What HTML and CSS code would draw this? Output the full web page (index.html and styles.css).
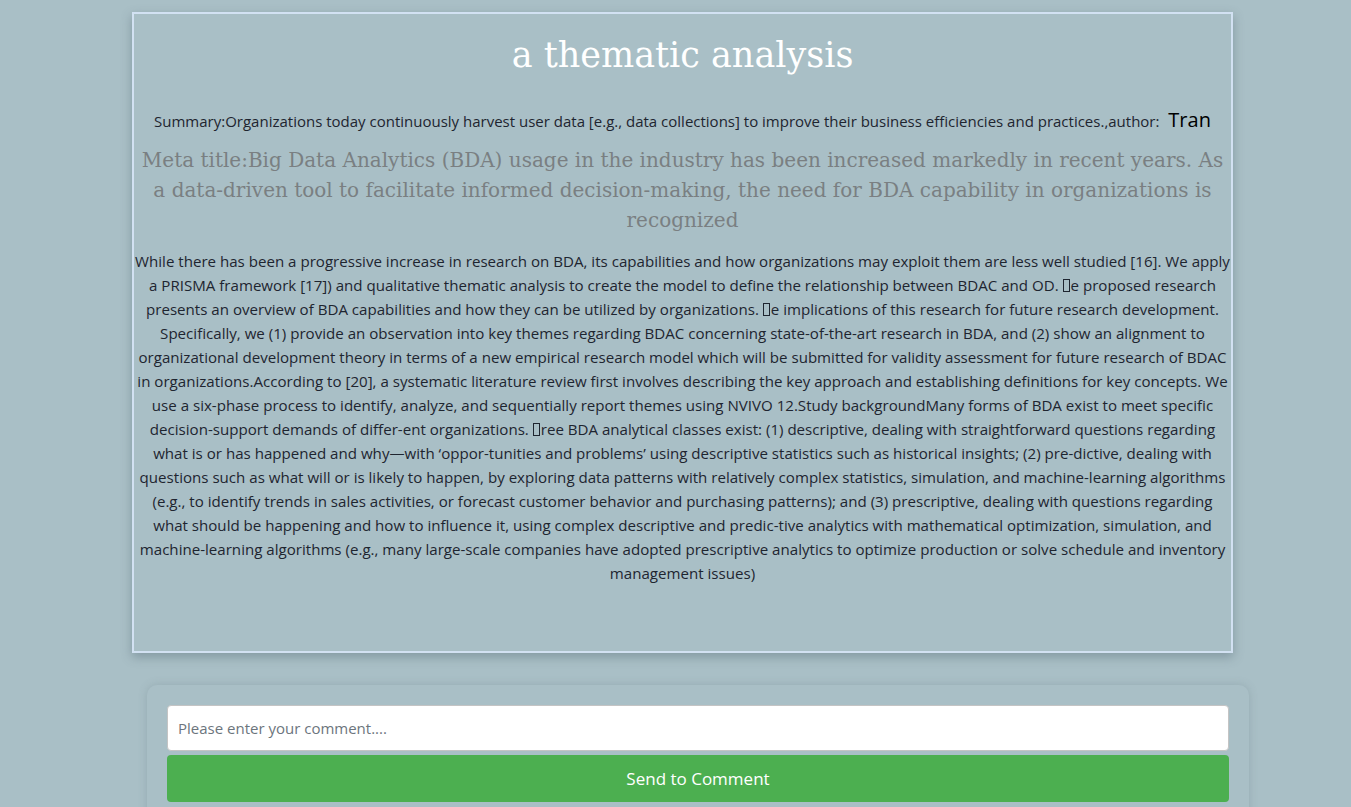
FILE: index.html
```html
<!DOCTYPE html>
<html>
<head>
<meta charset="utf-8">
<link rel="stylesheet" href="styles.css">
</head>
<body>
<div class="page">
  <article class="card">
    <h1 class="title">a thematic analysis</h1>
    <p class="summary">Summary:Organizations today continuously harvest user data [e.g., data collections] to improve their business efficiencies and practices.,author: <span class="author">Tran</span></p>
    <h2 class="meta">Meta title:Big Data Analytics (BDA) usage in the industry has been increased markedly in recent years. As a data-driven tool to facilitate informed decision-making, the need for BDA capability in organizations is recognized</h2>
    <p class="body">While there has been a progressive increase in research on BDA, its capabilities and how organizations may exploit them are less well studied [16]. We apply a PRISMA framework [17]) and qualitative thematic analysis to create the model to define the relationship between BDAC and OD. <span class="tofu"></span>e proposed research presents an overview of BDA capabilities and how they can be utilized by organizations. <span class="tofu"></span>e implications of this research for future research development. Specifically, we (1) provide an observation into key themes regarding BDAC concerning state-of-the-art research in BDA, and (2) show an alignment to organizational development theory in terms of a new empirical research model which will be submitted for validity assessment for future research of BDAC in organizations.According to [20], a systematic literature review first involves describing the key approach and establishing definitions for key concepts. We use a six-phase process to identify, analyze, and sequentially report themes using NVIVO 12.Study backgroundMany forms of BDA exist to meet specific decision-support demands of differ-ent organizations. <span class="tofu"></span>ree BDA analytical classes exist: (1) descriptive, dealing with straightforward questions regarding what is or has happened and why—with ‘oppor-tunities and problems’ using descriptive statistics such as historical insights; (2) pre-dictive, dealing with questions such as what will or is likely to happen, by exploring data patterns with relatively complex statistics, simulation, and machine-learning algorithms (e.g., to identify trends in sales activities, or forecast customer behavior and purchasing patterns); and (3) prescriptive, dealing with questions regarding what should be happening and how to influence it, using complex descriptive and predic-tive analytics with mathematical optimization, simulation, and machine-learning algorithms (e.g., many large-scale companies have adopted prescriptive analytics to optimize production or solve schedule and inventory management issues)</p>
  </article>
  <section class="comment">
    <input class="comment-input" type="text" placeholder="Please enter your comment....">
    <button class="comment-btn">Send to Comment</button>
  </section>
</div>
</body>
</html>
```
FILE: styles.css
```css
html, body {
  margin: 0;
  padding: 0;
  background: #a9bfc6;
}
body {
  font-family: "Open Sans", "Noto Sans", sans-serif;
  color: #1e2530;
  overflow: hidden;
}
.page {
  padding-top: 12px;
}
.card {
  margin-left: 132px;
  width: 1097px;
  height: 637px;
  border: 2px solid #d2e1f2;
  box-shadow: 0 4px 10px rgba(60, 80, 95, 0.35);
  padding: 0;
  text-align: center;
  box-sizing: content-box;
}
.title {
  margin: 19px 0 0;
  font-family: "DejaVu Serif", serif;
  font-weight: normal;
  font-size: 35px;
  line-height: 44px;
  color: #fff;
}
.summary {
  margin: 31px 0 0;
  font-size: 15px;
  line-height: 24px;
}
.author {
  font-size: 20px;
  color: #000;
  margin-left: 5px;
}
.tofu {
  display: inline-block;
  width: 5px;
  height: 11px;
  border: 1px solid #1e2530;
  margin: 0 1px 0 0;
  vertical-align: -1px;
}
.meta {
  margin: 12px 0 0;
  font-family: "DejaVu Serif", serif;
  font-weight: normal;
  font-size: 20px;
  line-height: 30px;
  color: #7a7f82;
}
.body {
  margin: 14px 0 0;
  font-size: 15.1px;
  line-height: 24px;
}
.comment {
  margin: 32px 0 0 147px;
  width: 1062px;
  padding: 20px 20px 20px;
  border-radius: 10px;
  box-shadow: 0 0 8px rgba(90, 110, 120, 0.25);
  display: flex;
  flex-direction: column;
  gap: 4px;
}
.comment-input {
  height: 46px;
  box-sizing: border-box;
  border: 1px solid #c4c4c4;
  border-radius: 4px;
  padding: 0 10px;
  font-family: "Open Sans", "Noto Sans", sans-serif;
  font-size: 15px;
  color: #333;
  background: #fff;
}
.comment-input::placeholder {
  color: #6c757d;
}
.comment-btn {
  height: 47px;
  border: none;
  border-radius: 4px;
  background: #4caf50;
  color: #fff;
  font-family: "Open Sans", "Noto Sans", sans-serif;
  font-size: 17px;
}
```
